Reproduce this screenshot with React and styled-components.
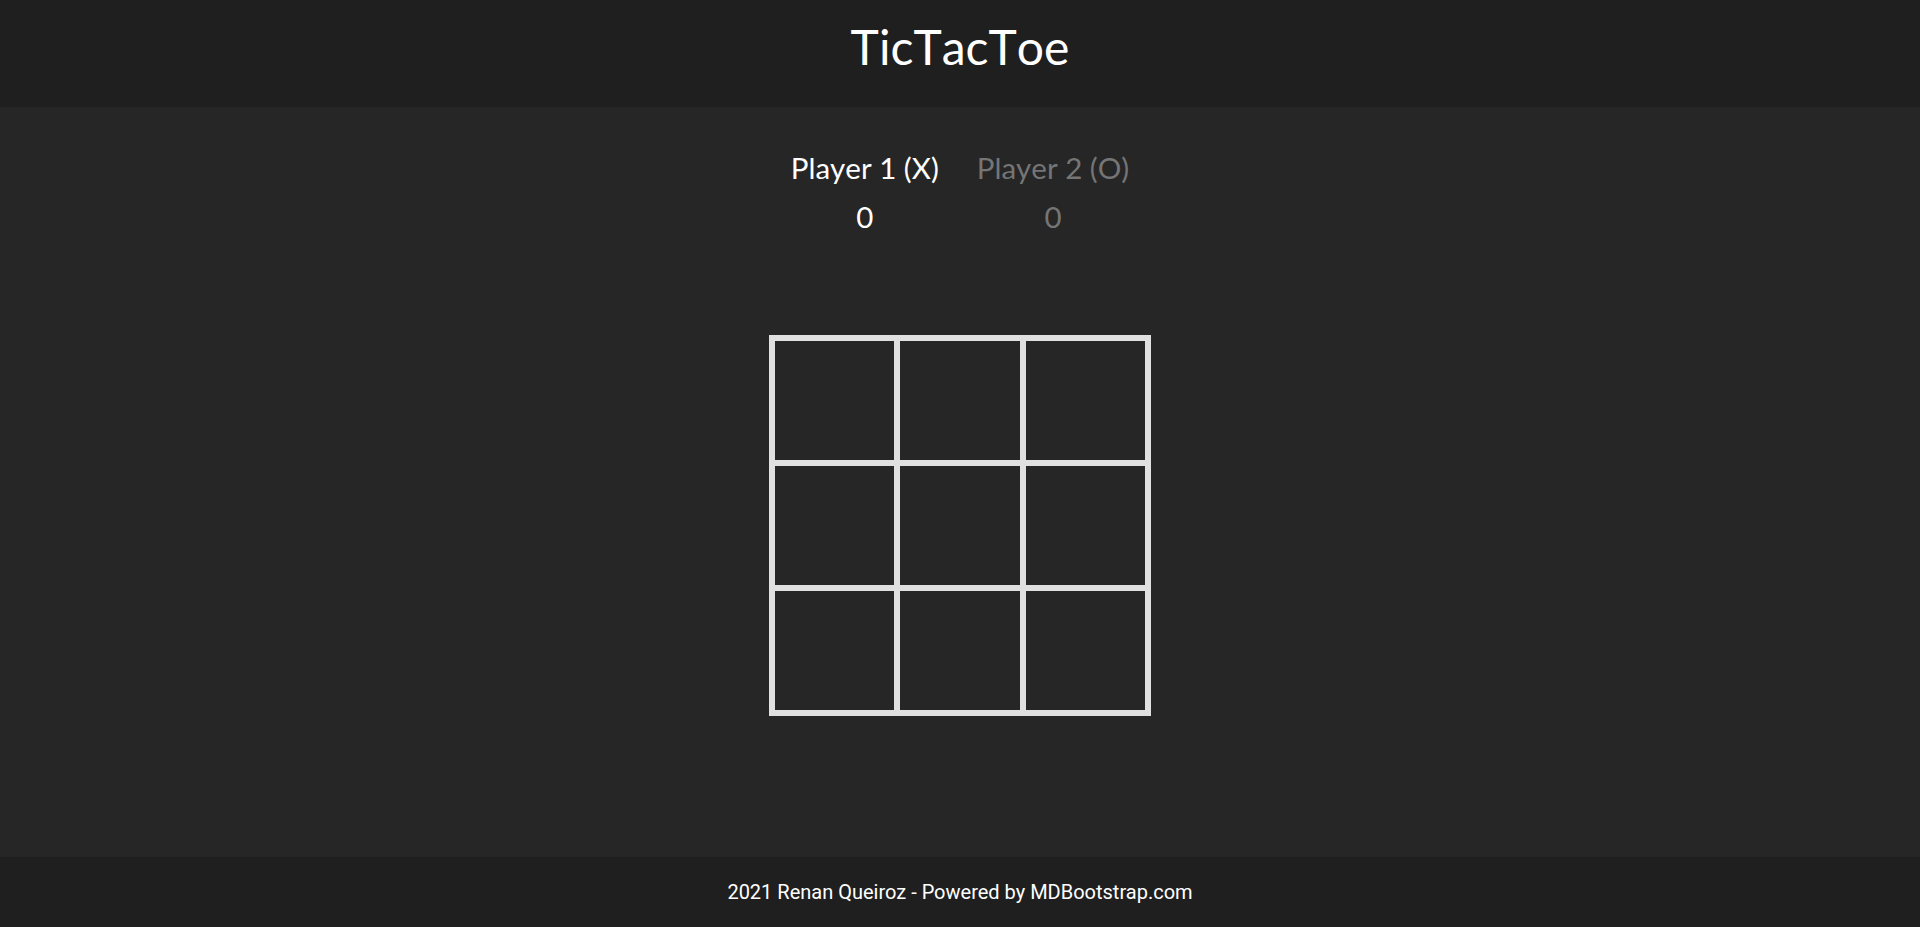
import React from "react";
import styled, { createGlobalStyle } from "styled-components";

const Global = createGlobalStyle`
  html, body { margin: 0; padding: 0; background: #262626; }
  body { font-family: Lato, "Noto Sans", sans-serif; }
  * { box-sizing: border-box; }
`;

const Page = styled.div`
  min-height: 927px;
  display: flex;
  flex-direction: column;
  background: #262626;
`;

const Header = styled.header`
  height: 107px;
  background: #1f1f1f;
  display: flex;
  justify-content: center;
  padding-top: 18px;
`;

const Title = styled.h1`
  margin: 0;
  font-family: Lato, sans-serif;
  font-weight: 400;
  font-size: 48px;
  line-height: 1.2;
  font-kerning: none;
  color: #ffffff;
`;

const Main = styled.main`
  flex: 1;
  display: flex;
  flex-direction: column;
  align-items: center;
  padding-top: 43px;
`;

const Scores = styled.div`
  display: flex;
  gap: 38px;
`;

const PlayerCol = styled.div`
  display: flex;
  flex-direction: column;
  align-items: center;
  gap: 14px;
  color: ${(p) => (p.$active ? "#ffffff" : "#757575")};
  font-family: Lato, sans-serif;
  font-size: 29.5px;
  line-height: 1.2;
  font-kerning: none;
`;

const Board = styled.div`
  margin-top: 100px;
  width: 382px;
  height: 381px;
  border: 3px solid #e0e0e0;
  display: grid;
  grid-template-columns: repeat(3, 1fr);
  grid-template-rows: repeat(3, 1fr);
`;

const Cell = styled.button`
  border: 3.5px solid #e0e0e0;
  background: #262626;
  padding: 0;
  cursor: pointer;
`;

const Footer = styled.footer`
  height: 70px;
  background: #1f1f1f;
  display: flex;
  align-items: center;
  justify-content: center;
  font-family: Roboto, sans-serif;
  font-size: 20px;
  color: #ffffff;
`;

export default function App() {
  return (
    <Page>
      <Global />
      <Header>
        <Title>TicTacToe</Title>
      </Header>
      <Main>
        <Scores>
          <PlayerCol $active>
            <span>Player 1 (X)</span>
            <span>0</span>
          </PlayerCol>
          <PlayerCol>
            <span>Player 2 (O)</span>
            <span>0</span>
          </PlayerCol>
        </Scores>
        <Board>
          {Array.from({ length: 9 }).map((_, i) => (
            <Cell key={i} aria-label={`cell ${i + 1}`} />
          ))}
        </Board>
      </Main>
      <Footer>2021 Renan Queiroz - Powered by MDBootstrap.com</Footer>
    </Page>
  );
}
